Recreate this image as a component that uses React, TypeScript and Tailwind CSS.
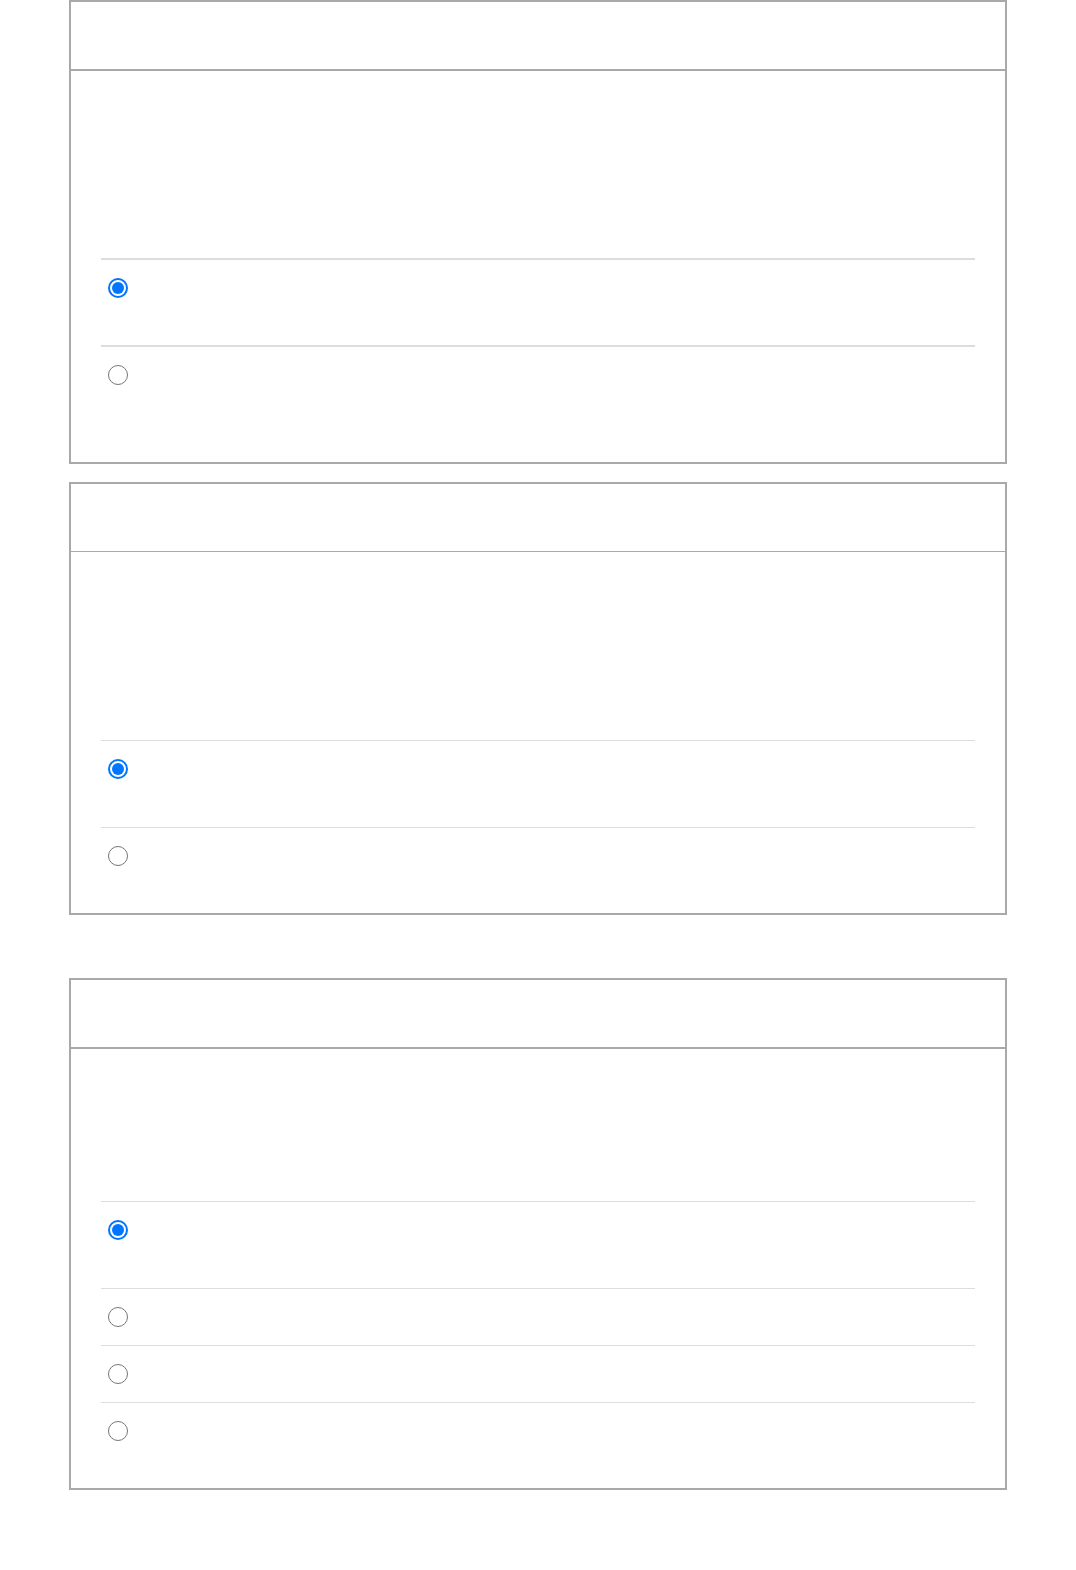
import React from "react";

function Radio({ checked }: { checked?: boolean }) {
  if (checked) {
    return (
      <div className="flex h-[20px] w-[20px] items-center justify-center rounded-full border-2 border-[#0075ff] bg-white">
        <div className="h-[12px] w-[12px] rounded-full bg-[#0075ff]" />
      </div>
    );
  }
  return <div className="h-[20px] w-[20px] rounded-full border-[1.5px] border-[#767676] bg-white" />;
}

function Row({ checked, h }: { checked?: boolean; h: string }) {
  return (
    <div className={"border-t border-[#dddddd] pl-[7px] pt-[18px] " + h}>
      <Radio checked={checked} />
    </div>
  );
}

export default function App() {
  return (
    <div className="min-h-[1570px] bg-white" style={{ fontFamily: '"Liberation Sans", Arial, sans-serif' }}>
      <div className="ml-[69px] w-[938px]">
        {/* Card 1 */}
        <div className="border-2 border-[#a9a9a9]">
          <div className="h-[67px] border-b-2 border-[#a9a9a9] box-content" />
          <div className="px-[30px] pb-[30px]">
            <div className="h-[187px]" />
            <div className="h-[87px] border-t-2 border-[#dddddd] pl-[7px] pt-[18px]">
              <Radio checked />
            </div>
            <div className="h-[87px] border-t-2 border-[#dddddd] pl-[7px] pt-[18px]">
              <Radio />
            </div>
          </div>
        </div>

        {/* Card 2 */}
        <div className="mt-[18px] border-2 border-[#a9a9a9]">
          <div className="h-[68px] border-b border-[#a9a9a9]" />
          <div className="px-[30px]">
            <div className="h-[188px]" />
            <Row checked h="h-[87px]" />
            <Row h="h-[86px]" />
          </div>
        </div>

        {/* Card 3 */}
        <div className="mt-[63px] border-2 border-[#a9a9a9]">
          <div className="h-[69px] border-b-2 border-[#a9a9a9]" />
          <div className="px-[30px] pb-[29px]">
            <div className="h-[152px]" />
            <Row checked h="h-[87px]" />
            <Row h="h-[57px]" />
            <Row h="h-[57px]" />
            <Row h="h-[57px]" />
          </div>
        </div>
      </div>
    </div>
  );
}
